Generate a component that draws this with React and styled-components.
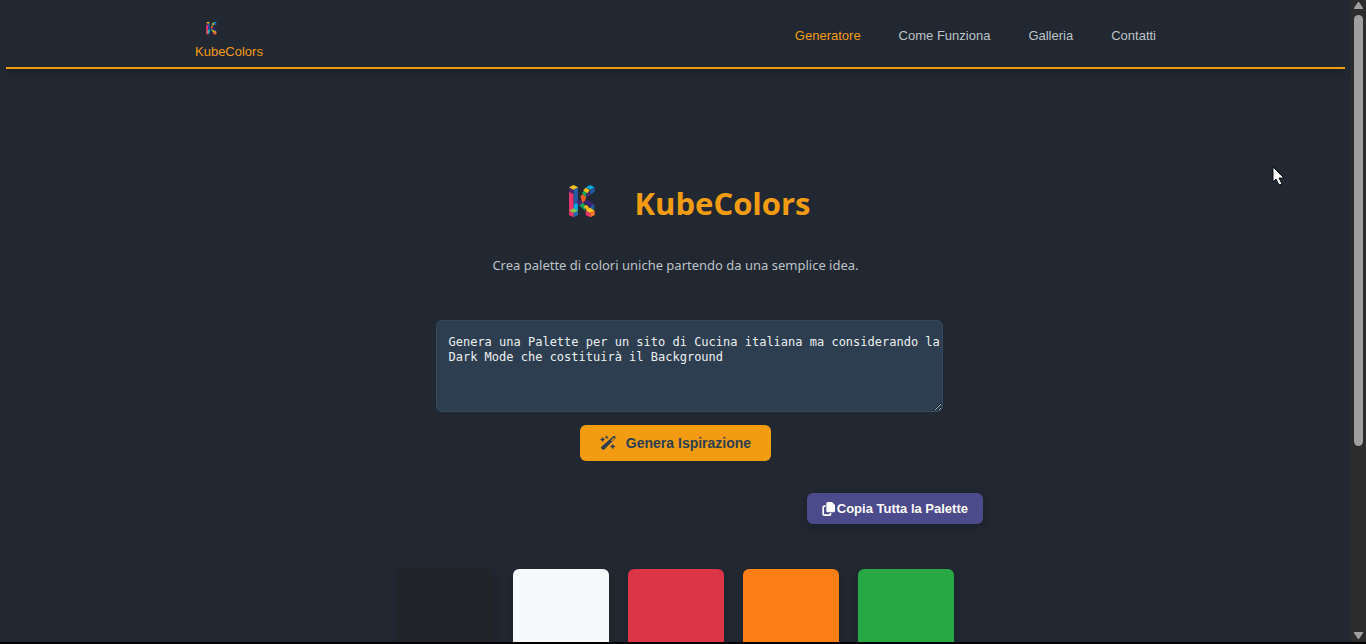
import React from "react";
import styled, { createGlobalStyle } from "styled-components";

const GlobalStyle = createGlobalStyle`
  * { box-sizing: border-box; }
  body {
    margin: 0;
    background: #212832;
    color: #bdc3c7;
    font-family: "Liberation Sans", Arial, sans-serif;
  }
`;

const Shell = styled.div`
  position: relative;
  display: flex;
  height: 100vh;
  overflow: hidden;
  border-bottom: 2px solid #000;
`;

const Page = styled.div`
  flex: 1;
  min-width: 0;
  overflow: hidden;
`;

const Header = styled.header`
  margin: 0 6px;
  border-bottom: 2px solid #f39c12;
  box-shadow: 0 4px 8px rgba(0, 0, 0, 0.2);
  clip-path: inset(0 0 -16px 0);
`;

const HeaderInner = styled.div`
  display: flex;
  align-items: center;
  justify-content: space-between;
  max-width: 961px;
  margin: 0 auto;
  padding: 13px 0 9px;
`;

const Brand = styled.a`
  display: flex;
  flex-direction: column;
  font-size: 13px;
  line-height: 13px;
  color: #f39c12;
  text-decoration: none;
`;

const Nav = styled.nav`
  display: flex;
  gap: 38px;
`;

const NavLink = styled.a`
  font-size: 13px;
  line-height: 20px;
  color: ${(p) => (p.$active ? "#f39c12" : "#bdc3c7")};
  text-decoration: none;
`;

const Logo = styled.svg`
  display: block;
  width: ${(p) => p.$size}px;
  height: ${(p) => p.$size}px;
`;

const Main = styled.main`
  display: flex;
  flex-direction: column;
  align-items: center;
  padding-top: 94px;
`;

const Hero = styled.div`
  display: flex;
  align-items: center;
  gap: 14px;
`;

const Title = styled.h1`
  margin: 0;
  font-family: "Open Sans", sans-serif;
  font-size: 31px;
  line-height: 40px;
  font-weight: 700;
  color: #f39c12;
`;

const Lead = styled.p`
  margin: 12px 0 0;
  font-family: "Noto Sans", sans-serif;
  font-size: 13px;
  line-height: 20px;
`;

const Form = styled.form`
  display: flex;
  flex-direction: column;
  align-items: center;
  width: 100%;
  max-width: 480px;
  margin-top: 45px;
`;

const Prompt = styled.textarea`
  display: block;
  align-self: flex-start;
  width: calc(100% + 27px);
  height: 92px;
  padding: 14px 0 10px 12px;
  border: 1px solid #34495e;
  border-radius: 6px;
  background: #2c3e50;
  color: #ecf0f1;
  font-family: "DejaVu Sans Mono", monospace;
  font-size: 12px;
  line-height: 15px;
  resize: vertical;
`;

const Button = styled.button`
  display: flex;
  align-items: center;
  border: 0;
  border-radius: 6px;
  font-family: inherit;
  font-weight: 700;
`;

const GenerateButton = styled(Button)`
  gap: 10px;
  height: 36px;
  margin-top: 13px;
  padding: 0 20px;
  background: #f39c12;
  color: #2c3e50;
  font-size: 14px;
`;

const CopyButton = styled(Button)`
  gap: 2px;
  height: 31px;
  padding: 0 15px;
  background: #4b4a8a;
  color: #fff;
  font-size: 13px;
  box-shadow: 0 2px 8px rgba(0, 0, 0, 0.25);
`;

const Results = styled.section`
  width: 100%;
  max-width: 615px;
  margin-top: 32px;
`;

const Toolbar = styled.div`
  display: flex;
  justify-content: flex-end;
`;

const Palette = styled.div`
  display: flex;
  justify-content: center;
  gap: 19px;
  margin-top: 45px;
`;

const Swatch = styled.div`
  width: 96px;
  height: 120px;
  border-radius: 6px;
  background: ${(p) => p.$color};
  box-shadow: 0 3px 10px rgba(0, 0, 0, 0.2);
`;

const Scrollbar = styled.div`
  display: flex;
  flex-direction: column;
  align-items: center;
  width: 15px;
  padding: 2px 0 3px;
  background: #2c2c2c;
`;

const Arrow = styled.svg`
  display: block;
  width: 9px;
  height: 8px;
  fill: #9f9f9f;
`;

const Track = styled.div`
  flex: 1;
  padding-top: 5px;
`;

const Thumb = styled.div`
  width: 9px;
  height: 70%;
  border-radius: 5px;
  background: #9f9f9f;
`;

const Cursor = styled.svg`
  position: absolute;
  left: 1272px;
  top: 166px;
  width: 13px;
  height: 20px;
`;

function WandIcon() {
  return (
    <svg width="16" height="16" viewBox="0 0 16 16" fill="currentColor" aria-hidden="true">
      <path d="M13.2 1.2a1.2 1.2 0 0 1 1.6 0l.6.6a1.2 1.2 0 0 1 0 1.6L4.2 14.6a1.2 1.2 0 0 1-1.7 0L1.4 13.5a1.2 1.2 0 0 1 0-1.7zM13.9 2.4l-2.9 2.9.9.9 2.9-2.9z" fillRule="evenodd" />
      <path d="M2.6 2.2l.7 1.6 1.6.7-1.6.7-.7 1.6-.7-1.6-1.6-.7 1.6-.7zM6.7.6l.5 1.1 1.1.5-1.1.5-.5 1.1-.5-1.1-1.1-.5 1.1-.5zM12.7 9l.8 1.7 1.7.8-1.7.8-.8 1.7-.8-1.7-1.7-.8 1.7-.8z" stroke="currentColor" strokeWidth=".4" />
    </svg>
  );
}

function CopyIcon() {
  return (
    <svg width="13" height="14" viewBox="0 0 13 14" aria-hidden="true">
      <path d="M3.5 4.2H2.2a1 1 0 0 0-1 1v6.9a1 1 0 0 0 1 1h5.3a1 1 0 0 0 1-1v-1" fill="none" stroke="currentColor" strokeWidth="1.7" />
      <path d="M5.8 0h4.1L13 3v5.8a1.5 1.5 0 0 1-1.5 1.5H5.8a1.5 1.5 0 0 1-1.5-1.5V1.500A1.500 1.500 0 0 1 5.800 0z" fill="currentColor" />
    </svg>
  );
}

function KubeLogo({ size }) {
  return (
    <Logo $size={size} viewBox="-66 -51 240 240" aria-hidden="true">
      <path fill="#49256f" d="M18 22l14 6v14l-14-6z" />
      <path fill="#e8336d" d="M18 36l14 6v68l-14-8z" />
      <path fill="#225b9f" d="M32 28l13-6v46l-13 8z" />
      <path fill="#02a7df" d="M32 74l13-8v26l-13 6z" />
      <path fill="#fcc21b" d="M18 22l14-7 13 7-13 7z" />
      <path fill="#8cc34b" d="M18 92l14-7 13 7-13 7z" />
      <path fill="#e8336d" d="M18 93l14 6v13l-14-7z" />
      <path fill="#256bad" d="M32 99l13-6v12l-13 7z" />
      <path fill="#49256f" d="M40 66l16-10 12 8-12 14-10-2z" />
      <path fill="#ef5b2a" d="M52 48l8-6 10 8-4 12-8 6z" />
      <path fill="#16a34a" d="M56 38l10-6 14 8-12 12z" />
      <path fill="#4a2772" d="M74 34l8-4v14l-10 8-4-6z" />
      <path fill="#fcc21b" d="M60 32l8-9 12 7-6 9z" />
      <path fill="#02a7df" d="M68 22l14-7 13 7-13 7z" />
      <path fill="#225b9f" d="M82 29l13-7v13l-13 9z" />
      <path fill="#12a25a" d="M48 76l12-8 8 8-2 16z" />
      <path fill="#3b2477" d="M62 66l14-6 18 12-12 9z" />
      <path fill="#fbb51c" d="M62 80l8-6 12 12-6 9z" />
      <path fill="#225b9f" d="M82 80l12-8v14l-10 5z" />
      <path fill="#fcc21b" d="M68 92l14-8 13 8-13 7z" />
      <path fill="#e8336d" d="M68 92l14 7v13l-14-7z" />
      <path fill="#f57a25" d="M82 99l13-7v13l-13 7z" />
    </Logo>
  );
}

const links = ["Generatore", "Come Funziona", "Galleria", "Contatti"];
const colors = ["#212529", "#f8f9fa", "#dc3545", "#fd7e14", "#28a745"];

export default function App() {
  return (
    <>
      <GlobalStyle />
      <Shell>
        <Page>
          <Header>
            <HeaderInner>
              <Brand href="#">
                <KubeLogo size={32} />
                KubeColors
              </Brand>
              <Nav>
                {links.map((label, i) => (
                  <NavLink key={label} href="#" $active={i === 0}>
                    {label}
                  </NavLink>
                ))}
              </Nav>
            </HeaderInner>
          </Header>
          <Main>
            <Hero>
              <KubeLogo size={80} />
              <Title>KubeColors</Title>
            </Hero>
            <Lead>Crea palette di colori uniche partendo da una semplice idea.</Lead>
            <Form onSubmit={(e) => e.preventDefault()}>
              <Prompt
                aria-label="Descrizione della palette"
                spellCheck={false}
                defaultValue="Genera una Palette per un sito di Cucina italiana ma considerando la Dark Mode che costituirà il Background"
              />
              <GenerateButton type="submit">
                <WandIcon />
                Genera Ispirazione
              </GenerateButton>
            </Form>
            <Results>
              <Toolbar>
                <CopyButton type="button">
                  <CopyIcon />
                  Copia Tutta la Palette
                </CopyButton>
              </Toolbar>
              <Palette>
                {colors.map((c) => (
                  <Swatch key={c} $color={c} />
                ))}
              </Palette>
            </Results>
          </Main>
        </Page>
        <Scrollbar aria-hidden="true">
          <Arrow viewBox="0 0 9 8">
            <path d="M4 0h1l4 6v1H0V6z" />
          </Arrow>
          <Track>
            <Thumb />
          </Track>
          <Arrow viewBox="0 0 9 8">
            <path d="M4 8h1l4-6V1H0v1z" />
          </Arrow>
        </Scrollbar>
        <Cursor viewBox="0 0 13 20" aria-hidden="true">
          <path d="M1 1v15l3-3 3 6 3-1-3-6h5z" fill="#fff" stroke="#0c0f14" />
        </Cursor>
      </Shell>
    </>
  );
}
